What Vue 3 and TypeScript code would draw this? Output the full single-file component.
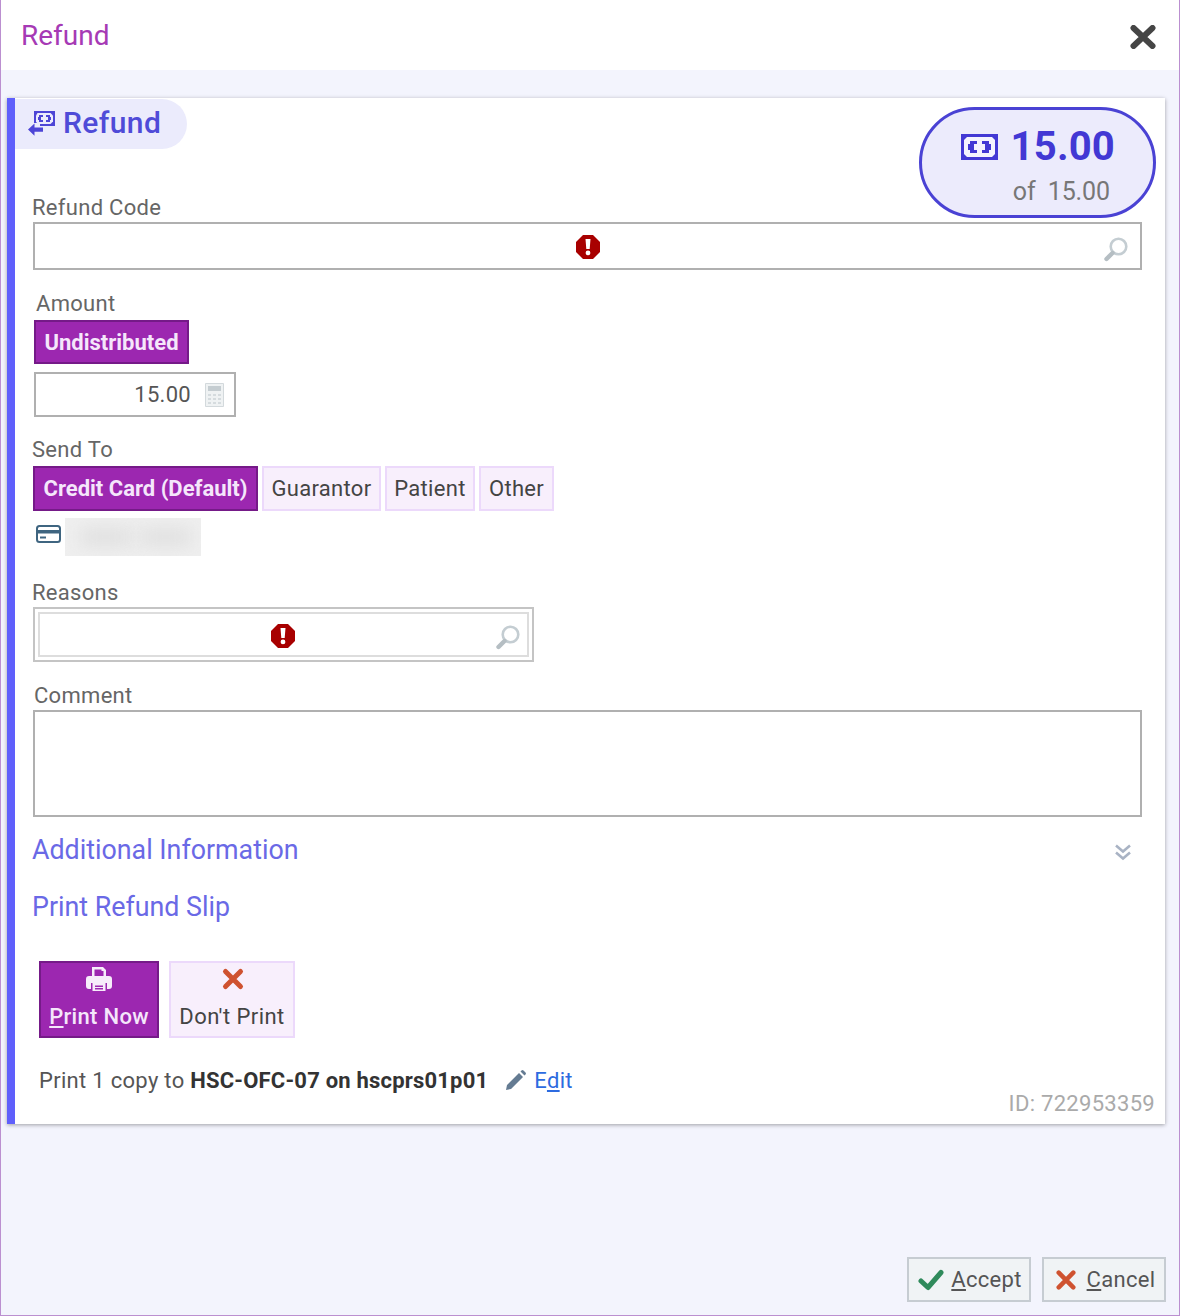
<script setup lang="ts">
const sendTo = [
  { label: 'Credit Card (Default)', width: 225, active: true },
  { label: 'Guarantor', width: 119, active: false },
  { label: 'Patient', width: 90, active: false },
  { label: 'Other', width: 75, active: false },
]
</script>

<template>
  <div class="window">
    <header class="title-bar">
      <span class="title">Refund</span>
      <svg class="close" width="26" height="24" viewBox="0 0 26 24">
        <path d="M3.5 3 22.5 21M22.5 3 3.5 21" stroke="#454545" stroke-width="6" stroke-linecap="round" />
      </svg>
    </header>

    <main class="body">
      <section class="card">
        <div class="tab">
          <svg width="28" height="26" viewBox="0 0 28 26">
            <path fill="#4d45d6" d="M6 1h21v15H6z" />
            <path fill="#ecebfc" d="M9.500 3h13l2.500 2.500v6L22.500 14h-13L8 11.500v-6z" />
            <path fill="#4d45d6" d="M15 5v2h-2v3h2v2h-4v-2h-1V7h1V5zM18 5h4v2h1v3h-1v2h-4v-2h2V7h-2z" />
            <path fill="#ebebfc" d="M3 13h9v3h5v9H3z" />
            <path fill="#4d45d6" d="M0 19.500 6.500 13.500v4H15v4.200H6.500v4z" />
          </svg>
          <span>Refund</span>
        </div>

        <div class="balance">
          <div class="balance-main">
            <svg width="37" height="26" viewBox="0 0 37 26">
              <path fill="#4238d4" d="M0 0h37v26H0z" />
              <path fill="#f4f3fe" d="M6 3h25l3 3v14l-3 3H6l-3-3V6z" />
              <path fill="#4238d4" d="M16 7v3h-3v6h3v3H9v-3H7v-6h2V7zM21 7h7v3h2v6h-2v3h-7v-3h3v-6h-3z" />
            </svg>
            <span>15.00</span>
          </div>
          <div class="balance-sub">of&nbsp; 15.00</div>
        </div>

        <label class="label">Refund Code</label>
        <div class="field code-field">
          <svg class="error" style="left: 540px" width="26" height="26" viewBox="0 0 26 26">
            <path fill="#a80000" d="M8 1h10l7 7v10l-7 7H8l-7-7V8z" />
            <path fill="#fff" d="M10.500 5h5l-.8 10h-3.400zM13 16.500a2.400 2.400 0 1 1 0 4.800 2.400 2.400 0 0 1 0-4.800z" />
          </svg>
          <svg class="search" width="26" height="26" viewBox="0 0 26 26" fill="none">
            <circle cx="15.500" cy="10.500" r="7.800" stroke="#c4cdd2" stroke-width="2.600" />
            <path d="M9.500 17 3.500 23" stroke="#b5bec3" stroke-width="4.400" stroke-linecap="round" />
          </svg>
        </div>

        <label class="label amount-label">Amount</label>
        <button class="btn active undistributed">Undistributed</button>
        <div class="amount-input">
          <span>15.00</span>
          <svg width="19" height="24" viewBox="0 0 19 24">
            <path fill="#eff2f3" stroke="#d3d9dc" d="M.5.500h18v23H.5z" />
            <path fill="#c5cdd1" d="M3 3h13v5H3z" />
            <path fill="#d5dbde" d="M3 11h3v2H3zM8 11h3v2H8zM13 11h3v2h-3zM3 15h3v2H3zM8 15h3v2H8zM13 15h3v2h-3zM3 19h3v2H3zM8 19h3v2H8zM13 19h3v2h-3z" />
          </svg>
        </div>

        <label class="label send-label">Send To</label>
        <div class="btn-row">
          <button
            v-for="b in sendTo"
            :key="b.label"
            class="btn"
            :class="{ active: b.active }"
            :style="{ width: b.width + 'px' }"
          >{{ b.label }}</button>
        </div>
        <div class="card-row">
          <svg width="25" height="18" viewBox="0 0 25 18" fill="none">
            <rect x="1" y="1" width="23" height="16" rx="2.500" stroke="#3f6580" stroke-width="2" />
            <path d="M1 5h23v3.500H1z" fill="#3f6580" />
            <path d="M4 12.500h6" stroke="#3f6580" stroke-width="2" />
          </svg>
          <div class="redacted"><i /><i /></div>
        </div>

        <label class="label reasons-label">Reasons</label>
        <div class="reasons">
          <div class="field reasons-inner">
            <svg class="error" style="left: 230px" width="26" height="26" viewBox="0 0 26 26">
              <path fill="#a80000" d="M8 1h10l7 7v10l-7 7H8l-7-7V8z" />
              <path fill="#fff" d="M10.500 5h5l-.8 10h-3.400zM13 16.500a2.400 2.400 0 1 1 0 4.800 2.400 2.400 0 0 1 0-4.800z" />
            </svg>
            <svg class="search" width="26" height="26" viewBox="0 0 26 26" fill="none">
              <circle cx="15.500" cy="10.500" r="7.800" stroke="#c4cdd2" stroke-width="2.600" />
              <path d="M9.500 17 3.500 23" stroke="#b5bec3" stroke-width="4.400" stroke-linecap="round" />
            </svg>
          </div>
        </div>

        <label class="label comment-label">Comment</label>
        <div class="comment" />

        <div class="section-row additional">
          <span>Additional Information</span>
          <svg width="18" height="18" viewBox="0 0 18 18" fill="none" stroke="#a9b3c4" stroke-width="2.600">
            <path d="M2 2.500 9 8.500 16 2.500M2 9.500 9 15.500 16 9.500" />
          </svg>
        </div>
        <div class="section-row print-slip">
          <span>Print Refund Slip</span>
        </div>

        <div class="print-actions">
          <button class="tile active">
            <svg width="26" height="26" viewBox="0 0 26 26" fill="#f6ecfa">
              <path fill-rule="evenodd" d="M6 1h11l3 3v6h3a3 3 0 0 1 3 3v7a3 3 0 0 1-3 3h-2v-6H5v6H3a3 3 0 0 1-3-3v-7a3 3 0 0 1 3-3h3zM8.500 3.500V10h9V5h-2V3.500z" />
              <path d="M6.500 17h13v8h-13zM9 19.500v1.400h8v-1.400zM9 22v1.400h8V22z" fill-rule="evenodd" />
            </svg>
            <span><u>P</u>rint Now</span>
          </button>
          <button class="tile">
            <svg width="26" height="26" viewBox="-3 -2 26 26">
              <path d="M3.500 3.500 18.500 18.500M18.500 3.500 3.500 18.500" stroke="#cf5230" stroke-width="5" stroke-linecap="round" />
            </svg>
            <span>Don't Print</span>
          </button>
        </div>

        <div class="print-line">
          <span>Print 1 copy to <b>HSC-OFC-07 on hscprs01p01</b></span>
          <svg class="pencil" width="22" height="22" viewBox="0 0 22 22">
            <path fill="#647b92" d="M2 16 14 4l4 4L6 20l-5 1zM15.500 2.500l1-1a1.500 1.500 0 0 1 2 0l2 2a1.500 1.500 0 0 1 0 2l-1 1z" />
          </svg>
          <a class="edit">E<u>d</u>it</a>
        </div>
        <div class="record-id">ID: 722953359</div>
      </section>

      <footer class="footer">
        <button class="foot-btn">
          <svg width="26" height="22" viewBox="0 0 26 22" fill="none">
            <path d="M3 12 10 18.500 23 3.500" stroke="#2f8a5b" stroke-width="5" stroke-linecap="round" stroke-linejoin="round" />
          </svg>
          <span><u>A</u>ccept</span>
        </button>
        <button class="foot-btn cancel">
          <svg width="20" height="20" viewBox="0 0 22 22">
            <path d="M3 3 19 19M19 3 3 19" stroke="#cf5230" stroke-width="5" stroke-linecap="round" />
          </svg>
          <span><u>C</u>ancel</span>
        </button>
      </footer>
    </main>
  </div>
</template>

<style>
html, body { margin: 0; background: #fff; }
</style>

<style scoped>
* { box-sizing: border-box; }
.window {
  width: 1180px;
  height: 1316px;
  display: flex;
  flex-direction: column;
  border: 1px solid #bb8fd0;
  border-top: none;
  font-family: Roboto, "Noto Sans", sans-serif;
  color: #444;
  background: #fff;
}
.title-bar {
  height: 70px;
  flex: 0 0 auto;
  display: flex;
  align-items: center;
  justify-content: space-between;
  padding: 0 23px 0 20px;
}
.title { font-size: 28px; color: #a63ab5; }
.close { margin-top: 3px; }

.body {
  flex: 1;
  display: flex;
  flex-direction: column;
  background: #f3f4fd;
  padding: 28px 14px 13px 6px;
}
.card {
  position: relative;
  background: #fff;
  border-left: 8px solid #5f5ffb;
  box-shadow: 0 1px 4px rgba(0, 0, 0, 0.35);
  padding: 1px 10px 7px 18px;
}
.tab {
  display: inline-flex;
  align-items: center;
  gap: 7px;
  height: 50px;
  width: 172px;
  margin-left: -18px;
  padding: 0 0 3px 13px;
  background: #ebebfc;
  border-radius: 0 25px 25px 0;
  color: #4f4bd8;
  font-size: 30px;
  font-weight: 500;
  letter-spacing: 0.4px;
  vertical-align: top;
}
.balance {
  position: absolute;
  top: 9px;
  right: 9px;
  width: 237px;
  height: 111px;
  border: 3px solid #4a42d4;
  border-radius: 56px;
  background: #ecebfc;
  padding: 14px 38px 0 0;
  text-align: right;
}
.balance-main {
  display: flex;
  justify-content: flex-end;
  align-items: center;
  gap: 13px;
  color: #4238d4;
  font-size: 40px;
  font-weight: 700;
  line-height: 46px;
  letter-spacing: 0.2px;
}
.balance-sub {
  font-size: 25px;
  color: #777;
  line-height: 30px;
  margin-top: 7px;
  padding-right: 5px;
  letter-spacing: -0.1px;
}

.label {
  display: block;
  height: 26px;
  font-size: 22px;
  line-height: 28px;
  color: #666;
  margin: 45px 0 0 -1px;
  letter-spacing: 0.3px;
}
.field {
  position: relative;
  background: #fff;
}
.code-field {
  height: 48px;
  margin-top: 2px;
  width: 1109px;
  border: 2px solid #b0b0b0;
}
.error { position: absolute; top: 10px; }
.search { position: absolute; right: 11px; top: 12px; }
.amount-label { margin: 20px 0 0 3px; }
.btn {
  font-family: inherit;
  font-size: 22px;
  height: 45px;
  padding: 0;
  border: 2px solid #ecd9fb;
  background: #f8effc;
  color: #444;
  letter-spacing: 0.3px;
}
.btn.active {
  background: #9c27b0;
  border-color: #751a88;
  color: #f5e6fb;
  font-weight: 700;
  letter-spacing: 0;
}
.undistributed {
  display: block;
  width: 155px;
  height: 44px;
  margin: 4px 0 0 1px;
}
.amount-input {
  display: flex;
  align-items: center;
  justify-content: flex-end;
  gap: 14px;
  width: 202px;
  height: 45px;
  margin: 8px 0 0 1px;
  padding-right: 10px;
  border: 2px solid #b0b0b0;
  font-size: 22px;
  letter-spacing: 0.3px;
  color: #555;
}
.send-label { margin-top: 19px; }
.btn-row {
  display: flex;
  gap: 4px;
  margin-top: 4px;
}
.card-row {
  display: flex;
  align-items: center;
  gap: 4px;
  margin: 7px 0 0 3px;
}
.card-row svg { margin-top: -6px; }
.redacted {
  position: relative;
  width: 136px;
  height: 38px;
  background: #efefef;
  overflow: hidden;
}
.redacted i {
  position: absolute;
  top: 12px;
  left: 16px;
  width: 50px;
  height: 14px;
  background: #dcdcdc;
  filter: blur(9px);
}
.redacted i + i { left: 76px; }
.reasons-label { margin-top: 23px; }
.reasons {
  width: 501px;
  height: 55px;
  margin-top: 2px;
  border: 2px solid #c4c4c4;
  padding: 3px;
}
.reasons-inner {
  height: 45px;
  border: 2px solid #ddd;
}
.reasons-inner .error { top: 9px; }
.reasons-inner .search { right: 6px; top: 10px; }
.comment-label { margin: 20px 0 0 1px; }
.comment {
  width: 1109px;
  height: 107px;
  margin-top: 2px;
  border: 2px solid #b0b0b0;
}
.section-row {
  display: flex;
  align-items: center;
  justify-content: space-between;
  height: 36px;
  width: 1100px;
  margin-left: -1px;
  padding-top: 1px;
  color: #6a69e6;
  font-size: 26.8px;
}
.additional { margin-top: 14px; }
.additional svg { margin-top: 4px; }
.print-slip { margin-top: 21px; }
.print-actions {
  display: flex;
  gap: 10px;
  margin: 37px 0 0 6px;
}
.tile {
  height: 77px;
  width: 126px;
  padding: 3px 0 0;
  display: flex;
  flex-direction: column;
  align-items: center;
  gap: 12px;
  font-family: inherit;
  font-size: 22px;
  line-height: 26px;
  border: 2px solid #ecd9fb;
  background: #f8effc;
  color: #444;
  letter-spacing: 0.45px;
}
.tile svg { flex: 0 0 auto; }
.tile.active {
  width: 120px;
  background: #9c27b0;
  border-color: #751a88;
  color: #f5e6fb;
  font-weight: 500;
  letter-spacing: 0.3px;
}
.print-line {
  display: flex;
  align-items: center;
  height: 26px;
  margin: 29px 0 0 6px;
  font-size: 22px;
  color: #555;
  letter-spacing: 0.3px;
}
.print-line b { color: #333; letter-spacing: 0.2px; }
.pencil { margin: 0 7px 0 17px; }
.edit { color: #2d6be0; }
.record-id {
  margin-top: -2px;
  height: 26px;
  line-height: 26px;
  text-align: right;
  font-size: 22px;
  color: #aaa;
  letter-spacing: 0.3px;
}

.footer {
  margin: auto -1px 0 0;
  display: flex;
  justify-content: flex-end;
  gap: 11px;
}
.foot-btn {
  display: flex;
  align-items: center;
  justify-content: center;
  gap: 7px;
  width: 124px;
  height: 45px;
  font-family: inherit;
  font-size: 22px;
  letter-spacing: 0.3px;
  color: #555;
  background: #f0f3f5;
  border: 2px solid #c6ccd2;
  padding: 0 0 0 2px;
}
.foot-btn.cancel { gap: 11px; padding-left: 3px; }
</style>
